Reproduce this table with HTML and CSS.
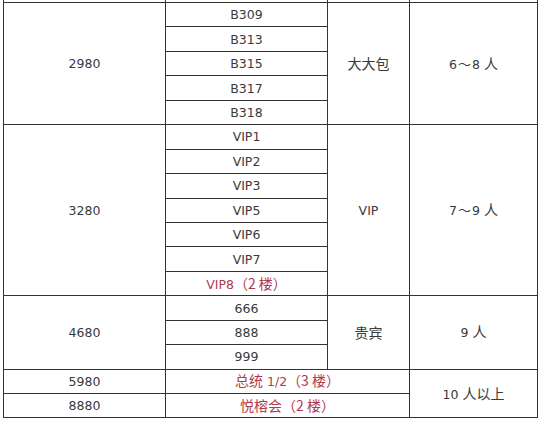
FILE: index.html
```html
<!DOCTYPE html>
<html lang="zh-CN">
<head>
<meta charset="utf-8">
<title>包厢价格</title>
<link rel="stylesheet" href="styles.css">
</head>
<body>
<table class="rates">
  <colgroup>
    <col class="c-price">
    <col class="c-room">
    <col class="c-type">
    <col class="c-people">
  </colgroup>
  <thead>
    <tr class="head"><td></td><td></td><td></td><td></td></tr>
  </thead>
  <tbody>
    <tr><td rowspan="5">2980</td><td>B309</td><td rowspan="5" class="cjk">大大包</td><td rowspan="5">6<span class="tilde">～</span>8 <span class="cjk">人</span></td></tr>
    <tr><td>B313</td></tr>
    <tr><td>B315</td></tr>
    <tr><td>B317</td></tr>
    <tr><td>B318</td></tr>

    <tr><td rowspan="7">3280</td><td>VIP1</td><td rowspan="7">VIP</td><td rowspan="7">7<span class="tilde">～</span>9 <span class="cjk">人</span></td></tr>
    <tr><td>VIP2</td></tr>
    <tr><td>VIP3</td></tr>
    <tr><td>VIP5</td></tr>
    <tr><td>VIP6</td></tr>
    <tr><td>VIP7</td></tr>
    <tr><td class="red">VIP8<span class="cjk">（2 楼）</span></td></tr>

    <tr><td rowspan="3">4680</td><td>666</td><td rowspan="3" class="cjk">贵宾</td><td rowspan="3">9 <span class="cjk">人</span></td></tr>
    <tr><td>888</td></tr>
    <tr><td>999</td></tr>

    <tr><td>5980</td><td colspan="2" class="red"><span class="cjk">总统</span> 1/2<span class="cjk">（3 楼）</span></td><td rowspan="2">10 <span class="cjk">人以上</span></td></tr>
    <tr><td>8880</td><td colspan="2" class="red"><span class="cjk">悦榕会（2 楼）</span></td></tr>
  </tbody>
</table>
</body>
</html>
```

FILE: styles.css
```css
html, body {
  margin: 0;
  padding: 0;
  background: #ffffff;
}

body {
  font-family: "DejaVu Sans", "Noto Sans CJK SC", sans-serif;
  font-size: 12.5px;
  color: #3a3a3a;
}

.rates {
  border-collapse: collapse;
  table-layout: fixed;
  width: 534px;
  margin: -22.4px 0 0 3px;
}

.c-price { width: 162px; }
.c-room { width: 162px; }
.c-type { width: 82px; }
.c-people { width: 128px; }

.rates tr {
  height: 24.44px;
}

.rates td {
  border: 1px solid #333333;
  padding: 0;
  text-align: center;
  vertical-align: middle;
  line-height: 15px;
  white-space: nowrap;
}

.cjk {
  font-family: "Noto Sans CJK SC", sans-serif;
  font-size: 14px;
}

.tilde {
  font-family: "Noto Sans CJK SC", sans-serif;
  font-size: 13px;
  margin: 0 1px;
}

.red {
  color: #b23a50;
}
```
